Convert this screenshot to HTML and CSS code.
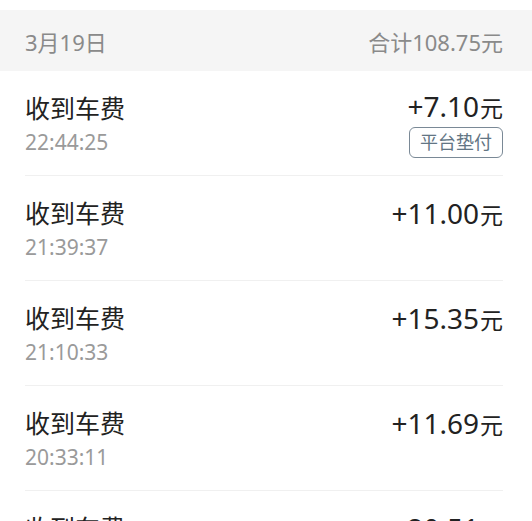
FILE: index.html
```html
<!DOCTYPE html>
<html lang="zh-CN">
<head>
    <meta charset="UTF-8">
    <meta name="viewport" content="width=device-width, initial-scale=1.0">
    <title>收支明细</title>
    <link rel="stylesheet" href="styles.css">
</head>
<body>
    <div class="page">
        <!-- Cabecera del día -->
        <div class="day-head">
            <span class="day-date">3月19日</span>
            <span class="day-total">合计108.75元</span>
        </div>

        <!-- Lista de movimientos -->
        <div class="list">
            <div class="row">
                <div class="info">
                    <div class="title">收到车费</div>
                    <div class="time">22:44:25</div>
                </div>
                <div class="side side-tag">
                    <div class="amount">+7.10<span class="unit">元</span></div>
                    <span class="tag">平台垫付</span>
                </div>
            </div>

            <div class="row">
                <div class="info">
                    <div class="title">收到车费</div>
                    <div class="time">21:39:37</div>
                </div>
                <div class="side">
                    <div class="amount">+11.00<span class="unit">元</span></div>
                </div>
            </div>

            <div class="row">
                <div class="info">
                    <div class="title">收到车费</div>
                    <div class="time">21:10:33</div>
                </div>
                <div class="side">
                    <div class="amount">+15.35<span class="unit">元</span></div>
                </div>
            </div>

            <div class="row">
                <div class="info">
                    <div class="title">收到车费</div>
                    <div class="time">20:33:11</div>
                </div>
                <div class="side">
                    <div class="amount">+11.69<span class="unit">元</span></div>
                </div>
            </div>

            <div class="row">
                <div class="info">
                    <div class="title">收到车费</div>
                    <div class="time">20:05:48</div>
                </div>
                <div class="side">
                    <div class="amount">+20.51<span class="unit">元</span></div>
                </div>
            </div>
        </div>
    </div>
</body>
</html>
```

FILE: styles.css
```css
/* Estilos globales */
body {
    margin: 0;
    padding: 0;
    background-color: #ffffff;
    font-family: "Noto Sans", "Noto Sans CJK SC", sans-serif;
    overflow: hidden;
}

.page {
    padding-top: 10px;
}

/* Cabecera del día */
.day-head {
    height: 61px;
    background-color: #f5f5f5;
    display: flex;
    justify-content: space-between;
    align-items: center;
    padding: 0 29px 0 25px;
    font-size: 22px;
    color: #8a8a8a;
}

/* Lista */
.list {
    margin: 0 29px 0 25px;
}

.row {
    height: 104px;
    border-bottom: 1px solid #f0f0f0;
    display: flex;
    justify-content: space-between;
    align-items: center;
}

.title {
    font-size: 25px;
    line-height: 34px;
    color: #222222;
}

.time {
    margin-top: 3px;
    font-size: 21px;
    line-height: 28px;
    color: #9a9a9a;
}

.side {
    align-self: flex-start;
    padding-top: 19px;
    display: flex;
    flex-direction: column;
    align-items: flex-end;
}

.side-tag {
    align-self: center;
    padding-top: 0;
}

.amount {
    font-size: 28px;
    line-height: 36px;
    color: #222222;
}

.unit {
    font-size: 23px;
    margin-left: 1px;
}

.tag {
    margin-top: 1px;
    padding: 0 10px;
    height: 29px;
    line-height: 29px;
    border: 1px solid #7a8996;
    border-radius: 6px;
    font-size: 18px;
    color: #627584;
}
```
